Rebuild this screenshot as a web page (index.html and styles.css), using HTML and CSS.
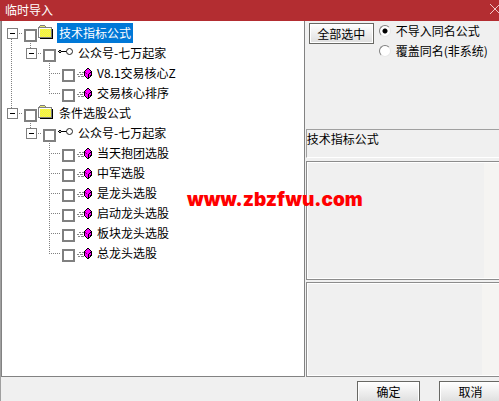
FILE: index.html
```html
<!DOCTYPE html>
<html lang="zh-CN">
<head>
  <meta charset="UTF-8">
  <meta name="viewport" content="width=device-width, initial-scale=1.0">
  <title>临时导入</title>
  <link rel="stylesheet" href="styles.css">
</head>
<body>
  <svg class="sprite" width="0" height="0" aria-hidden="true">
    <symbol id="folder" viewBox="0 0 16 16">
      <path d="M2 13h12V4h1v10H2z" fill="#000"/>
      <path d="M0 2h1V1h1V0h5v1h1v1h6v11H0z" fill="#808080"/>
      <path d="M1 3h12v9H1zM2 1h5v1H2z" fill="#e8e870"/>
      <path d="M2 4.5h11M2 6.5h11M2 8.5h11M2 10.5h11" stroke="#ffff20" stroke-dasharray="1 1"/>
      <path d="M3 5.5h10M3 7.5h10M3 9.5h10M3 11.5h10" stroke="#ffff20" stroke-dasharray="1 1"/>
      <path d="M1 3h12v1H2v8H1z" fill="#fff"/>
    </symbol>
    <symbol id="key" viewBox="0 0 16 16">
      <path d="M2 5h2v1h6v1H4v1H2V7H1V6h1z" fill="#000"/>
      <path d="M2 6h2v1H2z" fill="#aaa"/>
      <circle cx="12.5" cy="6.5" r="3" fill="#fff" stroke="#222"/>
    </symbol>
    <symbol id="formula" viewBox="0 0 16 16">
      <path d="M3 7h2v1H3zM6 7h2v1H6zM1 9h2v1H1zM4 9h3v1H4zM2 11h2v1H2zM5 11h3v1H5z" fill="#888"/>
      <path d="M11 3h2v1h1v1h1v1h1v5h-1v1h-1v1h-1v1h-2v-1h-1v-1H9v-1H8V6h1V5h1V4h1z" fill="#000"/>
      <path d="M11 4h2v1h1v1h1v1h-1v1h-1v1h-1v4h-1v-1h-1v-1H9V6h1V5h1zM13 9h1V8h1v2h-1v1h-1z" fill="#ff00ff"/>
      <path d="M9 7h1v1h1v1h-1V8H9z" fill="#800080"/>
      <path d="M13 11h1v1h-1z" fill="#ff00ff"/>
    </symbol>
  </svg>

  <div class="dialog">
    <header class="titlebar">
      <h1>临时导入</h1>
      <button class="close" type="button" aria-label="关闭">
        <svg width="9" height="10" viewBox="0 0 9 10"><path d="M0 0l10 10M10 0L0 10" stroke="#f0c8c8"/></svg>
      </button>
    </header>

    <main class="content">
      <ul class="tree">
        <li>
          <div class="row">
            <button class="twig toggle" type="button" aria-label="折叠"></button>
            <label><input type="checkbox"><svg class="icon"><use href="#folder"/></svg><span class="name selected">技术指标公式</span></label>
          </div>
          <ul>
            <li>
              <div class="row">
                <button class="twig toggle" type="button" aria-label="折叠"></button>
                <label><input type="checkbox"><svg class="icon"><use href="#key"/></svg><span class="name">公众号-七万起家</span></label>
              </div>
              <ul>
                <li><div class="row"><span class="twig"></span><label><input type="checkbox"><svg class="icon"><use href="#formula"/></svg><span class="name">V8.1交易核心Z</span></label></div></li>
                <li><div class="row"><span class="twig"></span><label><input type="checkbox"><svg class="icon"><use href="#formula"/></svg><span class="name">交易核心排序</span></label></div></li>
              </ul>
            </li>
          </ul>
        </li>
        <li>
          <div class="row">
            <button class="twig toggle" type="button" aria-label="折叠"></button>
            <label><input type="checkbox"><svg class="icon"><use href="#folder"/></svg><span class="name">条件选股公式</span></label>
          </div>
          <ul>
            <li>
              <div class="row">
                <button class="twig toggle" type="button" aria-label="折叠"></button>
                <label><input type="checkbox"><svg class="icon"><use href="#key"/></svg><span class="name">公众号-七万起家</span></label>
              </div>
              <ul>
                <li><div class="row"><span class="twig"></span><label><input type="checkbox"><svg class="icon"><use href="#formula"/></svg><span class="name">当天抱团选股</span></label></div></li>
                <li><div class="row"><span class="twig"></span><label><input type="checkbox"><svg class="icon"><use href="#formula"/></svg><span class="name">中军选股</span></label></div></li>
                <li><div class="row"><span class="twig"></span><label><input type="checkbox"><svg class="icon"><use href="#formula"/></svg><span class="name">是龙头选股</span></label></div></li>
                <li><div class="row"><span class="twig"></span><label><input type="checkbox"><svg class="icon"><use href="#formula"/></svg><span class="name">启动龙头选股</span></label></div></li>
                <li><div class="row"><span class="twig"></span><label><input type="checkbox"><svg class="icon"><use href="#formula"/></svg><span class="name">板块龙头选股</span></label></div></li>
                <li><div class="row"><span class="twig"></span><label><input type="checkbox"><svg class="icon"><use href="#formula"/></svg><span class="name">总龙头选股</span></label></div></li>
              </ul>
            </li>
          </ul>
        </li>
      </ul>

      <section class="side">
        <div class="options">
          <button class="btn" type="button">全部选中</button>
          <div class="radios">
            <label><input type="radio" name="mode" checked>不导入同名公式</label>
            <label><input type="radio" name="mode">覆盖同名(非系统)</label>
          </div>
        </div>
        <div class="caption">技术指标公式</div>
        <div class="pane pane-top"></div>
        <div class="pane pane-bottom"></div>
      </section>
    </main>

    <footer class="actions">
      <button class="btn" type="button">确定</button>
      <button class="btn" type="button">取消</button>
    </footer>

    <div class="watermark">www.zbzfwu.com</div>
  </div>
</body>
</html>
```

FILE: styles.css
```css
* { box-sizing: border-box; }
body {
  margin: 0;
  background: #f0f0f0;
  color: #000;
  font-family: "Noto Sans CJK SC", sans-serif;
  font-size: 12px;
  line-height: 20px;
}
button, input { font: inherit; color: inherit; margin: 0; }
.sprite { position: absolute; }
.dialog {
  position: relative;
  display: flex;
  flex-direction: column;
  height: 100vh;
  overflow: hidden;
}

/* title bar */
.titlebar {
  display: flex;
  justify-content: space-between;
  align-items: flex-start;
  flex: none;
  height: 21px;
  padding-left: 5px;
  background: #b32d31;
  color: #fff;
}
.titlebar h1 { margin: 0; font-size: 12px; font-weight: normal; }
.close { display: flex; padding: 4px 0 0; border: 0; background: none; }
.close svg { display: block; }

.content {
  display: flex;
  flex: 1;
  min-height: 0;
  border-left: 1px solid #a0a0a0;
}

/* tree */
.tree {
  flex: 0 0 61%;
  border: 1px solid #828282;
  border-top: 0;
  background: #fff;
  padding-top: 2px;
}
ul { margin: 0; padding: 0; list-style: none; }
li {
  background: repeating-linear-gradient(#808080 0 1px, transparent 1px 2px) 9px 0 / 1px 100% no-repeat;
}
li:last-child { background-size: 1px 10px; }
.tree > li:first-child { background-position: 9px 10px; }
li ul { padding-left: 19px; }
.row { display: flex; height: 20px; }
.row label { display: flex; }
.twig {
  width: 22px;
  height: 20px;
  padding: 0 0 0 5px;
  border: 0;
  background: repeating-linear-gradient(90deg, #808080 0 1px, transparent 1px 2px) 9px 10px / 12px 1px no-repeat;
}
.toggle::before {
  content: "";
  display: block;
  width: 9px;
  height: 9px;
  margin-top: 1px;
  border: 1px solid #808080;
  background: linear-gradient(#000, #000) center / 5px 1px no-repeat #fff;
}
.row input {
  appearance: none;
  width: 13px;
  height: 13px;
  margin: 6px 1px 0 0;
  border: 2px solid #808080;
  background: #fff;
}
.icon { width: 16px; height: 16px; margin: 2px 3px 0 0; }
.name { padding: 0 2px; line-height: 19px; }
.selected { background: #0078d7; color: #fff; }

/* right side */
.side {
  display: flex;
  flex-direction: column;
  flex: 1;
  min-width: 0;
  padding-left: 1px;
}
.options {
  display: flex;
  align-items: flex-start;
  gap: 5px;
  height: 108px;
  padding: 2px 0 0 3px;
}
.radios label { display: flex; align-items: center; height: 20px; gap: 5px; margin-top: -2px; margin-bottom: 2px; white-space: nowrap; }
.radios input {
  appearance: none;
  width: 12px;
  height: 12px;
  border: 1px solid;
  border-color: #808080 #e8e8e8 #e8e8e8 #808080;
  border-radius: 50%;
  background: #fff;
}
.radios input:checked { background: radial-gradient(circle, #000 2px, #fff 3px); }
.btn {
  width: 65px;
  height: 21px;
  padding: 0;
  border: 1px solid #686864;
  box-shadow: inset 0 0 0 1px #fff;
  background: linear-gradient(#fff, #dedede);
  line-height: 18px;
}
.caption {
  height: 29px;
  border: solid #a0a0a0;
  border-width: 1px 0 0 1px;
  border-bottom: 1px solid #fff;
  line-height: 18px;
}
.pane {
  border: 1px solid #8c8c8c;
  border-right: 0;
  box-shadow: inset 1px 1px #fff, inset 0 -1px #fff;
}
.pane-top {
  height: 119px;
  margin: 3px 0 2px;
  background: linear-gradient(90deg, #f0f0f0 92%, #f5f4f2 92%);
}
.pane-bottom { flex: 1; background: linear-gradient(90deg, #f0f0f0 91%, #f5f4f2 91%); }

/* bottom buttons run past the window edge */
.actions {
  display: flex;
  justify-content: flex-end;
  gap: 19px;
  flex: none;
  height: 24px;
  margin-right: -3px;
  padding-top: 4px;
  border-left: 1px solid #a0a0a0;
}
.actions .btn { width: 63px; height: 22px; }

.watermark {
  position: absolute;
  left: 187px;
  top: 190px;
  color: #f00;
  font: 900 19px/20px Inter, sans-serif;
}
```
